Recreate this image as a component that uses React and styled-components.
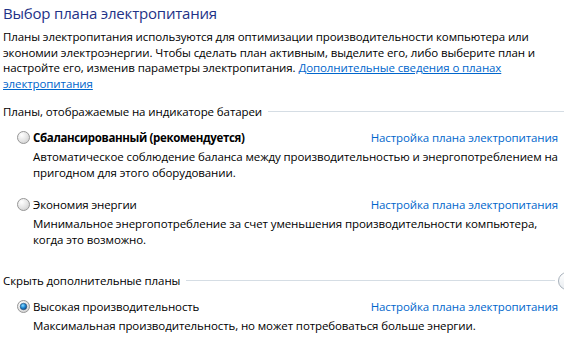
import React from 'react';
import styled, { createGlobalStyle } from 'styled-components';

const GlobalStyle = createGlobalStyle`
  html, body {
    margin: 0;
    padding: 0;
    background: #ffffff;
    overflow: hidden;
  }
  body {
    font-family: 'Open Sans', 'Noto Sans', sans-serif;
    font-size: 11.5px;
    letter-spacing: -0.1px;
    color: #000000;
  }
`;

const Page = styled.div`
  width: 564px;
  box-sizing: border-box;
  padding: 2px 6px 0 3px;
`;

const Title = styled.h1`
  margin: 0;
  font-size: 15px;
  font-weight: normal;
  letter-spacing: -0.2px;
  line-height: 22px;
  color: #1e3287;
`;

const Intro = styled.p`
  margin: 5px 0 0;
  line-height: 15.7px;
  white-space: nowrap;
`;

const Link = styled.a`
  color: #0066cc;
  text-decoration: ${(p) => (p.$underline ? 'underline' : 'none')};
  cursor: pointer;
`;

const Section = styled.section`
  margin-top: ${(p) => p.$top}px;
`;

const SectionHeader = styled.div`
  display: flex;
  align-items: center;
  height: 16px;
  margin-bottom: 10px;
`;

const HeaderText = styled.span`
  white-space: nowrap;
`;

const Rule = styled.div`
  flex: 1;
  height: 1px;
  margin-left: 6px;
  margin-right: ${(p) => (p.$toEdge ? '-6px' : '0')};
  background: #d5dde4;
`;

const CollapseButton = styled.button`
  flex: none;
  width: 18px;
  height: 18px;
  margin: 0 -18px 0 3px;
  padding: 0;
  border: 1px solid #a7b0ba;
  border-radius: 50%;
  background: linear-gradient(#ffffff, #e9edf1);
`;

const PlanList = styled.div`
  display: flex;
  flex-direction: column;
  gap: 16px;
`;

const PlanRow = styled.div`
  display: flex;
  align-items: center;
  height: 16px;
  padding-left: 14px;
`;

const PlanName = styled.span`
  margin-left: 3px;
  font-weight: ${(p) => (p.$bold ? 'bold' : 'normal')};
  letter-spacing: ${(p) => (p.$bold ? '-0.35px' : '-0.1px')};
  white-space: nowrap;
`;

const PlanLink = styled(Link)`
  margin-left: auto;
  white-space: nowrap;
`;

const PlanDesc = styled.div`
  margin-top: 3px;
  padding-left: 30px;
  line-height: 16px;
  white-space: nowrap;
`;

const Radio = ({ checked }) => (
  <svg width="13" height="13" viewBox="0 0 13 13">
    <defs>
      <radialGradient id="rOff" cx="0.35" cy="0.3" r="0.8">
        <stop offset="0" stopColor="#ffffff" />
        <stop offset="0.6" stopColor="#e4e4e4" />
        <stop offset="1" stopColor="#cdcdcd" />
      </radialGradient>
      <radialGradient id="rOn" cx="0.4" cy="0.35" r="0.7">
        <stop offset="0" stopColor="#8fdcff" />
        <stop offset="0.5" stopColor="#1e8ad6" />
        <stop offset="1" stopColor="#0b3f7a" />
      </radialGradient>
    </defs>
    <circle cx="6.5" cy="6.5" r="6" fill="url(#rOff)" stroke="#979797" strokeWidth="1" />
    {checked && <circle cx="6.5" cy="6.5" r="3.3" fill="url(#rOn)" stroke="#2a4f77" strokeWidth="0.6" />}
  </svg>
);

const Plan = ({ name, bold, checked, children }) => (
  <div>
    <PlanRow>
      <Radio checked={checked} />
      <PlanName $bold={bold}>{name}</PlanName>
      <PlanLink>Настройка плана электропитания</PlanLink>
    </PlanRow>
    <PlanDesc>{children}</PlanDesc>
  </div>
);

export default function App() {
  return (
    <Page>
      <GlobalStyle />
      <Title>Выбор плана электропитания</Title>
      <Intro>
        Планы электропитания используются для оптимизации производительности компьютера или
        <br />
        экономии электроэнергии. Чтобы сделать план активным, выделите его, либо выберите план и
        <br />
        настройте его, изменив параметры электропитания. <Link $underline>Дополнительные сведения о планах
        <br />
        электропитания</Link>
      </Intro>

      <Section $top={12}>
        <SectionHeader>
          <HeaderText>Планы, отображаемые на индикаторе батареи</HeaderText>
          <Rule $toEdge />
        </SectionHeader>
        <PlanList>
          <Plan name="Сбалансированный (рекомендуется)" bold>
            Автоматическое соблюдение баланса между производительностью и энергопотреблением на
            <br />
            пригодном для этого оборудовании.
          </Plan>
          <Plan name="Экономия энергии">
            Минимальное энергопотребление за счет уменьшения производительности компьютера,
            <br />
            когда это возможно.
          </Plan>
        </PlanList>
      </Section>

      <Section $top={25}>
        <SectionHeader>
          <HeaderText>Скрыть дополнительные планы</HeaderText>
          <Rule />
          <CollapseButton aria-label="Скрыть" />
        </SectionHeader>
        <PlanList>
          <Plan name="Высокая производительность" checked>
            Максимальная производительность, но может потребоваться больше энергии.
          </Plan>
        </PlanList>
      </Section>
    </Page>
  );
}
